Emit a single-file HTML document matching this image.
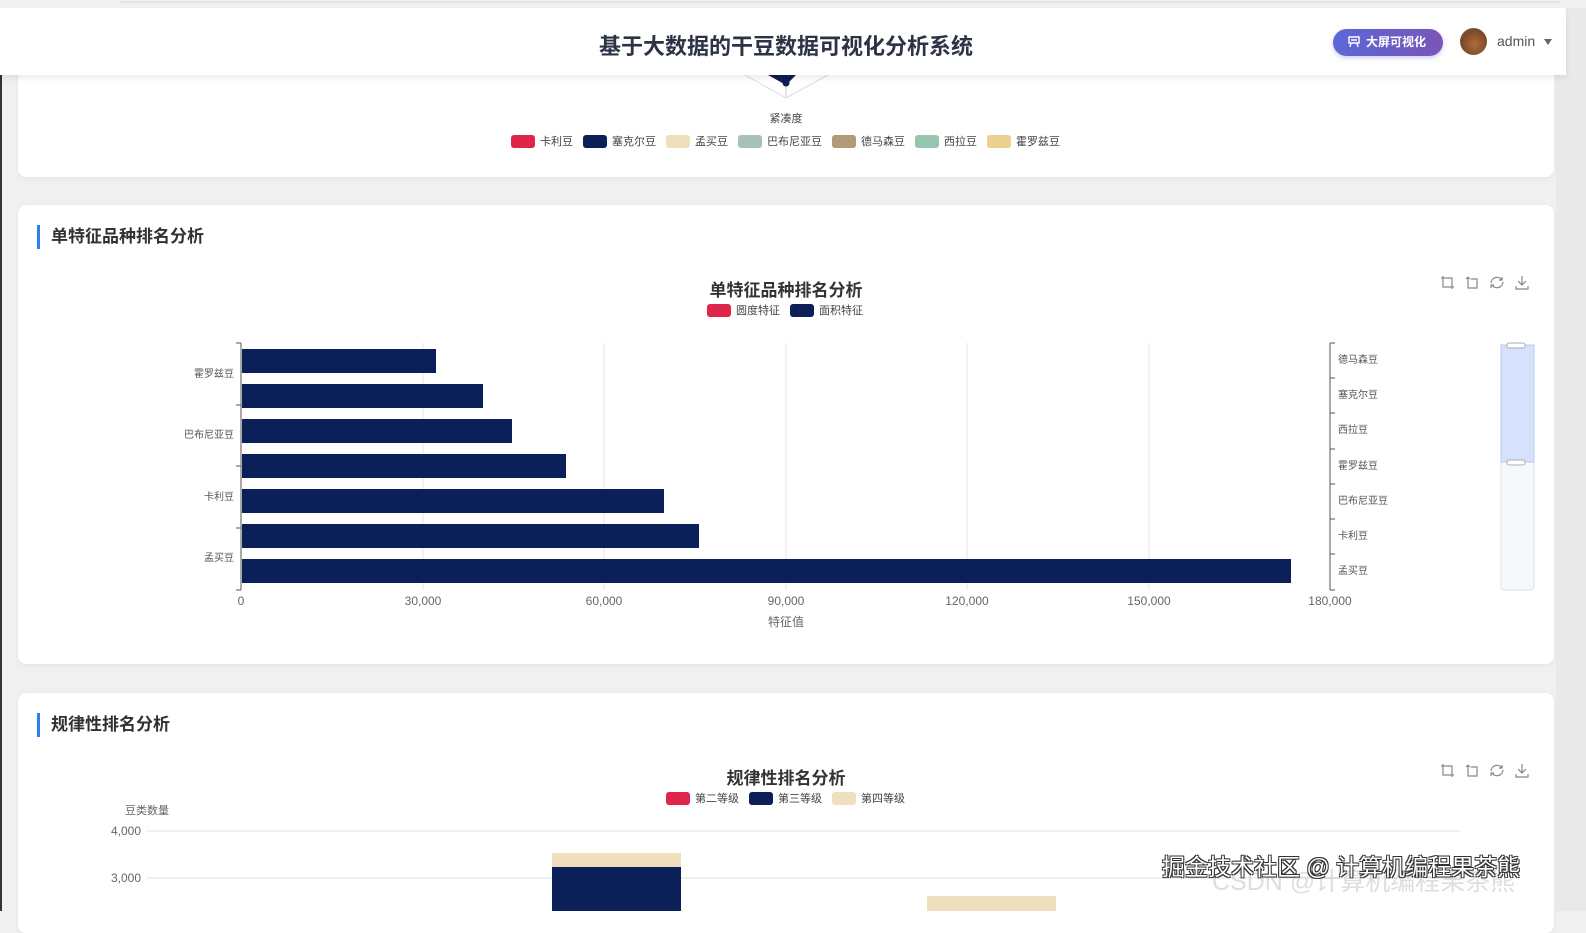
<!DOCTYPE html>
<html><head><meta charset="utf-8">
<style>
*{margin:0;padding:0;box-sizing:border-box}
body{width:1586px;height:911px;overflow:hidden;background:#f0f0f0;font-family:"Liberation Sans","Noto Sans CJK SC",sans-serif;position:relative;color:#333}
.abs{position:absolute}
.card{position:absolute;left:18px;width:1536px;background:#fff;border-radius:8px;box-shadow:0 1px 4px rgba(0,0,0,.06)}
.sec{position:absolute;left:37px;border-left:3px solid #2f80ed;padding-left:11px;font-size:17px;font-weight:bold;color:#303133;height:24px;line-height:24px}
.lg{position:absolute;font-size:11px;color:#444;display:flex;gap:10px;align-items:center;white-space:nowrap}
.lg span{display:flex;align-items:center;gap:5px}
.lg i{width:24px;height:13px;border-radius:3px}
</style></head><body>
<div class="abs" style="left:0;top:0;width:2px;height:911px;background:#333"></div>
<div class="abs" style="left:1556px;top:0;width:30px;height:911px;background:#e9e9e9"></div>

<div class="card" style="top:40px;height:137px"></div>
<svg class="abs" style="left:0;top:0" width="1586" height="911">
<polyline points="745,75 786,98 828,75" fill="none" stroke="#ddd"/>
<line x1="786" y1="75" x2="786" y2="98" stroke="#ccc"/>
<path d="M768,75 L786,85 L796,75 Z" fill="#0d1f4f"/>
<circle cx="786" cy="83" r="3.5" fill="#0d1f4f"/>
</svg>
<div class="abs" style="left:0;width:1572px;top:110px;text-align:center;font-size:11px;color:#444">紧凑度</div>
<div class="lg" style="left:511px;top:133px">
<span><i style="background:#e0254a"></i>卡利豆</span>
<span><i style="background:#0d1f57"></i>塞克尔豆</span>
<span><i style="background:#efe0bd"></i>孟买豆</span>
<span><i style="background:#a5c2b5"></i>巴布尼亚豆</span>
<span><i style="background:#b09c77"></i>德马森豆</span>
<span><i style="background:#95c6b0"></i>西拉豆</span>
<span><i style="background:#ebd08f"></i>霍罗兹豆</span>
</div>

<div class="abs" style="left:0;top:0;width:1586px;height:8px;background:#f0f0f0"></div>
<div class="abs" style="left:120px;top:1px;width:1440px;height:2px;background:#e4e4e4"></div>
<div class="abs" style="left:0;top:8px;width:1566px;height:67px;background:#fff;box-shadow:0 3px 6px rgba(0,0,0,.08)"></div>
<div class="abs" style="left:0;width:1572px;top:29px;text-align:center;font-size:22px;font-weight:bold;color:#2c3345">基于大数据的干豆数据可视化分析系统</div>
<div class="abs" style="left:1333px;top:29px;width:110px;height:27px;border-radius:14px;background:linear-gradient(90deg,#5a68d6,#7a55b8);color:#fff;font-size:12px;font-weight:bold;line-height:27px;padding-left:33px;box-shadow:0 2px 5px rgba(90,90,200,.3)">大屏可视化</div>
<svg class="abs" style="left:1347px;top:35px" width="14" height="14" viewBox="0 0 14 14"><path d="M2,2 H12 V8 H2 Z M4,8 L3,12 M10,8 L11,12 M4,5 H10" fill="none" stroke="#fff" stroke-width="1.4"/></svg>
<div class="abs" style="left:1460px;top:28px;width:27px;height:27px;border-radius:50%;background:radial-gradient(circle at 55% 60%,#b06a3a,#7a4a2a 60%,#667 100%)"></div>
<div class="abs" style="left:1497px;top:33px;font-size:14px;color:#555">admin</div>
<div class="abs" style="left:1544px;top:39px;border-left:4px solid transparent;border-right:4px solid transparent;border-top:6px solid #666"></div>

<div class="card" style="top:205px;height:459px"></div>
<div class="sec" style="top:225px">单特征品种排名分析</div>
<div class="abs" style="left:0;width:1572px;top:276px;text-align:center;font-size:17px;font-weight:bold;color:#333">单特征品种排名分析</div>
<div class="lg" style="left:707px;top:302px">
<span><i style="background:#e0254a"></i>圆度特征</span>
<span><i style="background:#0d1f57"></i>面积特征</span>
</div>
<svg class="abs" style="left:0;top:0" width="1586" height="911" font-family="Liberation Sans,Noto Sans CJK SC,sans-serif">
<g stroke="#888" fill="none" stroke-width="1.2">
<g transform="translate(1440,275)"><path d="M3,1 V12 H14 M1,3 H12 V14"/></g>
<g transform="translate(1464,275)"><path d="M4,2 V13 H13 V4 H7 M4,2 L2,4 M4,2 L6,4"/></g>
<g transform="translate(1489,275)"><path d="M2,8 A6,6 0 0 1 13,5 M14,7 A6,6 0 0 1 3,10 M13,2 V5 H10 M2,13 V10 H5"/></g>
<g transform="translate(1515,275)"><path d="M7,1 V10 M3,6 L7,10 L11,6 M1,11 V14 H13 V11"/></g>
<g transform="translate(1440,763)"><path d="M3,1 V12 H14 M1,3 H12 V14"/></g>
<g transform="translate(1464,763)"><path d="M4,2 V13 H13 V4 H7 M4,2 L2,4 M4,2 L6,4"/></g>
<g transform="translate(1489,763)"><path d="M2,8 A6,6 0 0 1 13,5 M14,7 A6,6 0 0 1 3,10 M13,2 V5 H10 M2,13 V10 H5"/></g>
<g transform="translate(1515,763)"><path d="M7,1 V10 M3,6 L7,10 L11,6 M1,11 V14 H13 V11"/></g>
</g>
<g stroke="#e6e6e6">
<line x1="423" y1="343" x2="423" y2="590"/><line x1="604" y1="343" x2="604" y2="590"/><line x1="786" y1="343" x2="786" y2="590"/><line x1="967" y1="343" x2="967" y2="590"/><line x1="1149" y1="343" x2="1149" y2="590"/>
</g>
<g fill="#0b1f58">
<rect x="242" y="349" width="194" height="24"/>
<rect x="242" y="384" width="241" height="24"/>
<rect x="242" y="419" width="270" height="24"/>
<rect x="242" y="454" width="324" height="24"/>
<rect x="242" y="489" width="422" height="24"/>
<rect x="242" y="524" width="457" height="24"/>
<rect x="242" y="559" width="1049" height="24"/>
</g>
<g stroke="#555" fill="none">
<path d="M241,343 V590 M236,343 H241 M236,405 H241 M236,466 H241 M236,528 H241 M236,590 H241"/>
<path d="M1330,343 V590 M1330,343 h5 M1330,378 h5 M1330,413 h5 M1330,449 h5 M1330,484 h5 M1330,519 h5 M1330,554 h5 M1330,590 h5"/>
</g>
<g font-size="10" fill="#555" text-anchor="end">
<text x="234" y="377">霍罗兹豆</text><text x="234" y="438">巴布尼亚豆</text><text x="234" y="500">卡利豆</text><text x="234" y="561">孟买豆</text>
</g>
<g font-size="10" fill="#555">
<text x="1338" y="363">德马森豆</text><text x="1338" y="398">塞克尔豆</text><text x="1338" y="433">西拉豆</text><text x="1338" y="469">霍罗兹豆</text><text x="1338" y="504">巴布尼亚豆</text><text x="1338" y="539">卡利豆</text><text x="1338" y="574">孟买豆</text>
</g>
<g font-size="12" fill="#666" text-anchor="middle">
<text x="241" y="605">0</text><text x="423" y="605">30,000</text><text x="604" y="605">60,000</text><text x="786" y="605">90,000</text><text x="967" y="605">120,000</text><text x="1149" y="605">150,000</text><text x="1330" y="605">180,000</text>
<text x="786" y="626">特征值</text>
</g>
<rect x="1501" y="345" width="33" height="245" rx="3" fill="#f7f8fc" stroke="#dde2ef"/>
<rect x="1501" y="345" width="33" height="117" fill="#d6e2fb" stroke="#b9c9ef"/>
<rect x="1507" y="343" width="18" height="5" rx="2" fill="#fff" stroke="#aab"/>
<rect x="1507" y="460" width="18" height="5" rx="2" fill="#fff" stroke="#aab"/>
<line x1="147" y1="831" x2="1460" y2="831" stroke="#e0e0e0"/>
<line x1="147" y1="878" x2="1460" y2="878" stroke="#e0e0e0"/>
<g font-size="12" fill="#666" text-anchor="end"><text x="141" y="835">4,000</text><text x="141" y="882">3,000</text></g>
<text x="125" y="814" font-size="11" fill="#666">豆类数量</text>
<rect x="552" y="853" width="129" height="14" fill="#efdfbd"/>
<rect x="552" y="867" width="129" height="44" fill="#0b1f58"/>
<rect x="927" y="896" width="129" height="15" fill="#efdfbd"/>
</svg>

<div class="card" style="top:693px;height:240px;z-index:-1"></div>
<div class="sec" style="top:713px">规律性排名分析</div>
<div class="abs" style="left:0;width:1572px;top:764px;text-align:center;font-size:17px;font-weight:bold;color:#333">规律性排名分析</div>
<div class="lg" style="left:666px;top:790px">
<span><i style="background:#e0254a"></i>第二等级</span>
<span><i style="background:#0d1f57"></i>第三等级</span>
<span><i style="background:#efe0bd"></i>第四等级</span>
</div>
<div class="abs" style="left:1212px;top:862px;font-size:25px;color:rgba(200,200,200,.6);white-space:nowrap">CSDN @计算机编程果茶熊</div>
<div class="abs" style="left:1162px;top:848px;font-size:23px;color:#fff;white-space:nowrap;text-shadow:1px 1px 0 #333,-1px -1px 0 #333,1px -1px 0 #333,-1px 1px 0 #333">掘金技术社区 @ 计算机编程果茶熊</div>
</body></html>
